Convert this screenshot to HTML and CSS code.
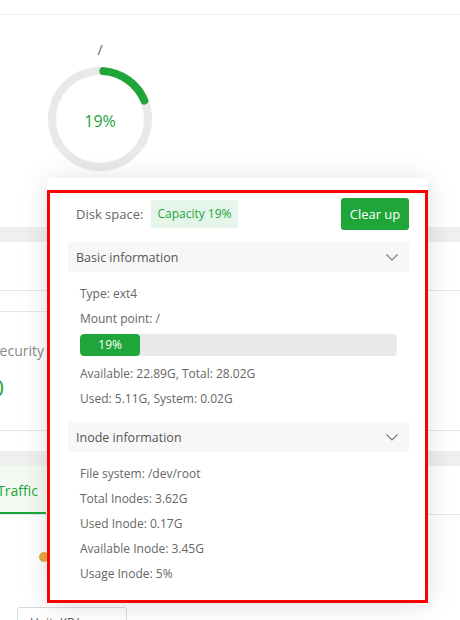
FILE: index.html
```html
<!DOCTYPE html>
<html lang="en">
<head>
<meta charset="utf-8">
<title>Disk</title>
<link rel="stylesheet" href="styles.css">
</head>
<body>
<div class="page">
  <div class="topbar"></div>
  <div class="disk-panel">
    <div class="disk-item">
      <div class="disk-path">/</div>
      <div class="ring">
        <svg class="ring-svg" width="104" height="104" viewBox="0 0 104 104">
          <circle cx="52" cy="52" r="48" fill="none" stroke="#e9e9e9" stroke-width="8"/>
          <circle cx="52" cy="52" r="48" fill="none" stroke="#20a53a" stroke-width="8" stroke-linecap="round" stroke-dasharray="53 400" transform="rotate(-86 52 52)"/>
        </svg>
        <span class="ring-text">19%</span>
      </div>
    </div>
  </div>
  <div class="band"></div>
  <div class="sec1"></div>
  <div class="sec2">
    <div class="sub-head"></div>
    <div class="clip-col"><span class="sec-label">Security</span></div>
    <div class="clip-col num-col"><span class="sec-num">0</span></div>
  </div>
  <div class="gap"></div>
  <div class="band"></div>
  <div class="tabs">
    <div class="tab-active"><span>Traffic</span></div>
  </div>
  <div class="chart">
    <div class="legend-row"><span class="dot"></span></div>
    <div class="unit-btn">Unit: KB/s <span class="caret"></span></div>
  </div>

  <div class="popover">
    <div class="pop-body">
      <div class="pop-head">
        <div class="pop-title">
          <span class="pop-label">Disk space:</span>
          <span class="badge">Capacity 19%</span>
        </div>
        <button class="btn-green">Clear up</button>
      </div>
      <div class="coll">
        <div class="coll-head">
          <span>Basic information</span>
          <svg class="chev" width="12" height="7" viewBox="0 0 12 7"><polyline points="0.5,0.5 6,6 11.5,0.5" fill="none" stroke="#777" stroke-width="1.1"/></svg>
        </div>
        <div class="coll-body">
          <div class="line">Type: ext4</div>
          <div class="line">Mount point: /</div>
          <div class="bar"><div class="bar-fill" style="width:19%">19%</div></div>
          <div class="line line-after-bar">Available: 22.89G, Total: 28.02G</div>
          <div class="line">Used: 5.11G, System: 0.02G</div>
        </div>
      </div>
      <div class="coll coll-2">
        <div class="coll-head">
          <span>Inode information</span>
          <svg class="chev" width="12" height="7" viewBox="0 0 12 7"><polyline points="0.5,0.5 6,6 11.5,0.5" fill="none" stroke="#777" stroke-width="1.1"/></svg>
        </div>
        <div class="coll-body">
          <div class="line">File system: /dev/root</div>
          <div class="line">Total Inodes: 3.62G</div>
          <div class="line">Used Inode: 0.17G</div>
          <div class="line">Available Inode: 3.45G</div>
          <div class="line">Usage Inode: 5%</div>
        </div>
      </div>
    </div>
  </div>
</div>
</body>
</html>
```

FILE: styles.css
```css
* { box-sizing: border-box; }
html, body { margin: 0; padding: 0; background: #fff; }
body {
  font-family: "Open Sans", "Noto Sans", "Liberation Sans", sans-serif;
  font-size: 12px;
  color: #666;
}
.page {
  position: relative;
  width: 460px;
  height: 620px;
  overflow: hidden;
}
.topbar {
  height: 15px;
  border-bottom: 1px solid #ececec;
}
.disk-panel {
  height: 212px;
}
.disk-item {
  margin-left: 48px;
  width: 104px;
  padding-top: 27px;
  display: flex;
  flex-direction: column;
  align-items: center;
}
.disk-path {
  font-size: 14px;
  line-height: 16px;
  color: #666;
}
.ring {
  margin-top: 9px;
  display: grid;
  place-items: center;
}
.ring-svg, .ring-text { grid-area: 1 / 1; }
.ring-text {
  padding-top: 3px;
  font-size: 16px;
  color: #20a53a;
}
.band {
  height: 15px;
  background: #efefef;
}
.sec1 {
  height: 49px;
  border-bottom: 1px solid #e8e8e8;
}
.sec2 {
  height: 140px;
  border-bottom: 1px solid #e8e8e8;
}
.sub-head {
  width: 240px;
  height: 21px;
  border-bottom: 1px solid #e8e8e8;
}
.clip-col {
  width: 44px;
  display: flex;
  justify-content: flex-end;
  overflow: hidden;
  white-space: nowrap;
}
.num-col { width: 4px; }
.sec-label {
  margin-top: 29px;
  font-size: 14px;
  line-height: 20px;
  color: #888;
}
.sec-num {
  margin-top: 12px;
  font-size: 22px;
  line-height: 28px;
  color: #20a53a;
}
.gap { height: 20px; }
.tabs {
  height: 49px;
  border-bottom: 1px solid #e4e7ed;
}
.tab-active {
  width: 46px;
  height: 48px;
  background: #f3faf4;
  border-bottom: 2px solid #20a53a;
  display: flex;
  justify-content: flex-end;
  align-items: center;
  padding: 3px 8px 0 0;
  overflow: hidden;
  white-space: nowrap;
  font-size: 14px;
  color: #20a53a;
}
.chart {
  padding-top: 37px;
}
.legend-row {
  padding-left: 39px;
  height: 10px;
}
.dot {
  display: block;
  width: 10px;
  height: 10px;
  border-radius: 50%;
  background: #e9aa3f;
}
.unit-btn {
  margin-top: 45px;
  margin-left: 17px;
  width: 110px;
  height: 28px;
  border: 1px solid #d9d9d9;
  border-radius: 3px;
  padding: 6px 12px;
  font-size: 12px;
  color: #555;
}

/* popover */
.popover {
  position: absolute;
  left: 47px;
  top: 178px;
  width: 381px;
  padding-top: 12px;
  background: #fff;
  border-radius: 4px;
  box-shadow: 0 2px 28px rgba(0, 0, 0, 0.13);
}
.pop-body {
  border: 3px solid #ff0000;
  padding: 5px 16px 14px 18px;
}
.pop-head {
  display: flex;
  justify-content: space-between;
  align-items: center;
  height: 32px;
}
.pop-title {
  display: flex;
  align-items: center;
  padding-left: 8px;
  gap: 8px;
}
.pop-label {
  font-size: 13px;
  color: #666;
}
.badge {
  background: #e6f5e9;
  color: #20a53a;
  height: 28px;
  line-height: 28px;
  padding: 0 6px;
  border-radius: 2px;
  font-size: 12px;
}
.btn-green {
  width: 68px;
  height: 32px;
  background: #20a53a;
  color: #fff;
  border: none;
  border-radius: 3px;
  font-family: inherit;
  font-size: 13px;
  padding: 0;
}
.coll { margin-top: 12px; }
.coll-2 { margin-top: 11px; }
.coll-head {
  height: 30px;
  background: #f7f7f7;
  display: flex;
  align-items: center;
  justify-content: space-between;
  padding: 0 11px 0 8px;
  font-size: 12.5px;
  color: #555;
}
.coll-body {
  padding: 9px 12px 0;
}
.line {
  line-height: 25px;
  font-size: 12px;
  color: #666;
}
.line-after-bar { margin-top: 5px; }
.bar {
  margin-top: 3px;
  height: 22px;
  background: #e9e9e9;
  border-radius: 4px;
  overflow: hidden;
}
.bar-fill {
  height: 22px;
  background: #20a53a;
  border-radius: 4px;
  color: #fff;
  font-size: 12px;
  line-height: 22px;
  text-align: center;
}
```
